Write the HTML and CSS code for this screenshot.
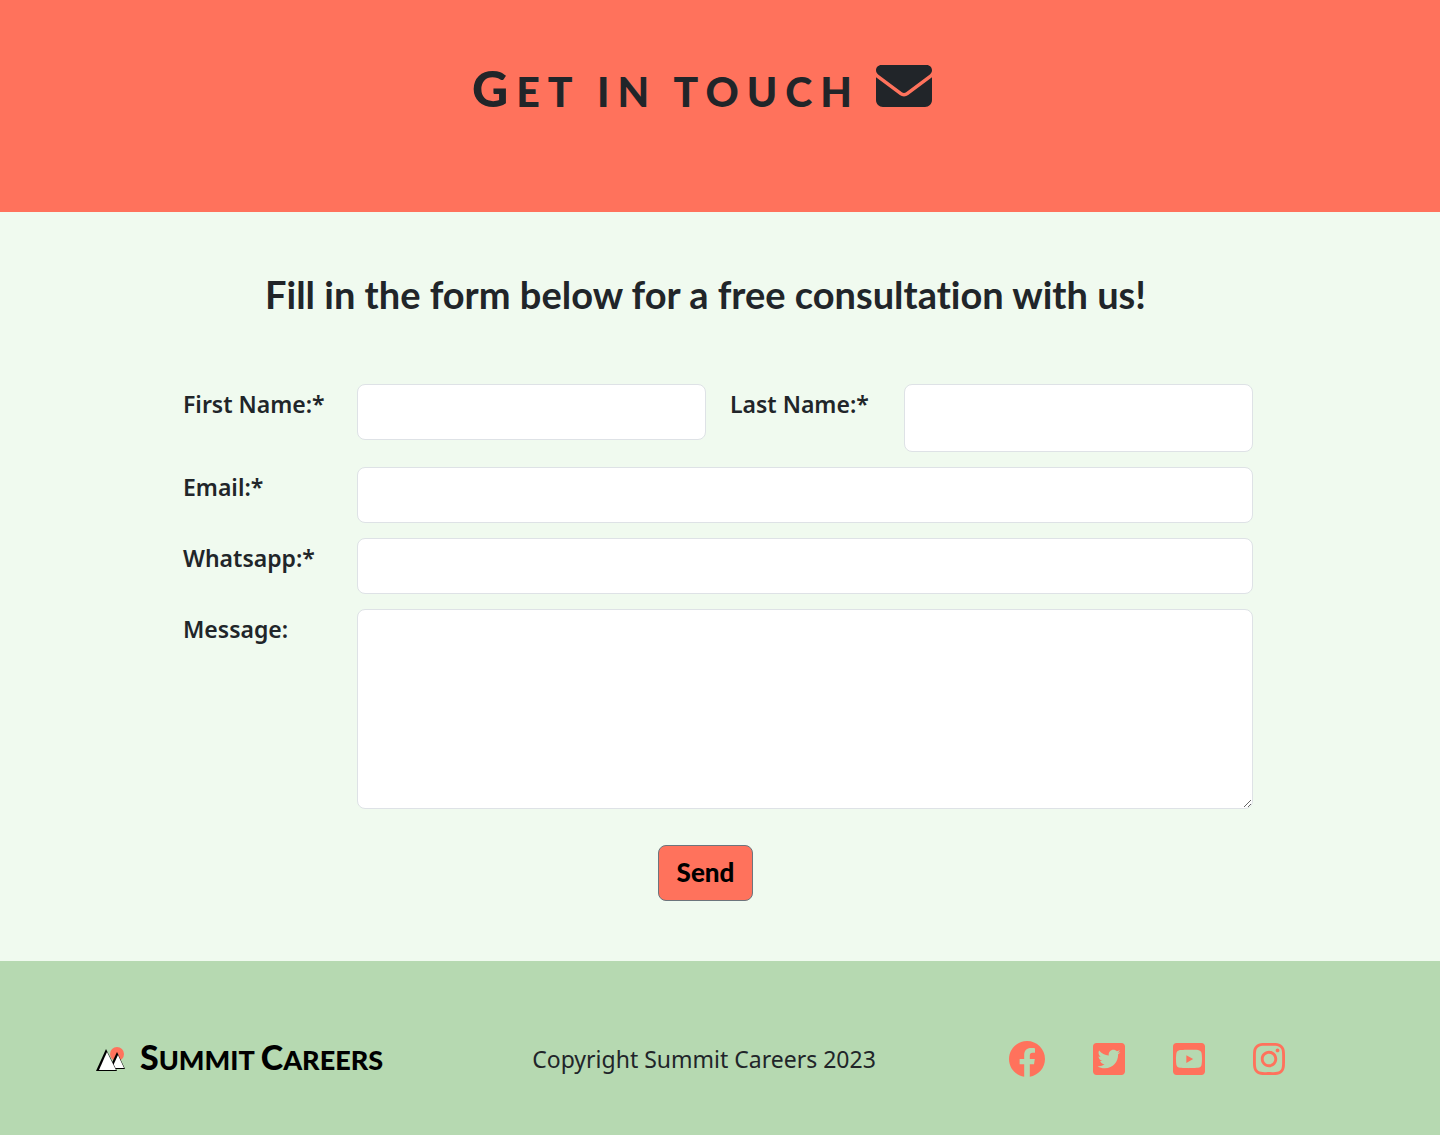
FILE: index.html
```html
<!DOCTYPE html>
<html lang="en">
<head>
  <meta charset="utf-8">
  <meta name="viewport" content="width=device-width, initial-scale=1">
  <title>Contact | Summit Careers</title>
  <link rel="stylesheet" href="styles.css">
</head>
<body>
  <header class="banner">
    <h1 class="banner-title">Get in touch</h1>
    <svg class="banner-icon" viewBox="0 0 512 512" aria-hidden="true"><path d="M48 64C21.500 64 0 85.500 0 112c0 15.100 7.100 29.300 19.200 38.400L236.800 313.600c11.400 8.500 27 8.500 38.400 0L492.800 150.400c12.100-9.100 19.200-23.300 19.200-38.400c0-26.500-21.500-48-48-48L48 64zM0 176L0 384c0 35.300 28.700 64 64 64l384 0c35.300 0 64-28.700 64-64l0-208L294.400 339.200c-22.800 17.100-54 17.100-76.800 0L0 176z"/></svg>
  </header>

  <main class="contact">
    <h2 class="contact-title">Fill in the form below for a free consultation with us!</h2>
    <form class="form">
      <label for="first-name">First Name:*</label>
      <input class="field" id="first-name" type="text" required>
      <label for="last-name">Last Name:*</label>
      <input class="field field-tall" id="last-name" type="text" required>
      <label for="email">Email:*</label>
      <input class="field field-wide" id="email" type="email" required>
      <label for="whatsapp">Whatsapp:*</label>
      <input class="field field-wide" id="whatsapp" type="tel" required>
      <label for="message">Message:</label>
      <textarea class="field field-wide field-message" id="message"></textarea>
      <div class="actions"><button class="send" type="submit">Send</button></div>
    </form>
  </main>

  <footer class="footer">
    <a class="brand" href="#">
      <svg class="brand-mark" viewBox="0 0 30 26" aria-hidden="true">
        <circle cx="21" cy="8" r="7" fill="#ff725c"/>
        <path d="M13 23L21 6l8 17z" fill="#000"/>
        <path d="M16 22L22 9l6 13z" fill="#fff"/>
        <path d="M0 25L10 3l11 22z" fill="#000"/>
        <path d="M3 24L11 6l9 18z" fill="#fff"/>
      </svg>
      <span class="brand-name"><span class="brand-word">Summit</span> <span class="brand-word">Careers</span></span>
    </a>
    <p class="copyright">Copyright Summit Careers 2023</p>
    <nav class="social" aria-label="Social media">
      <a href="#" aria-label="Facebook"><svg viewBox="8 8 496 496"><path d="M504 256C504 119 393 8 256 8S8 119 8 256c0 123.780 90.690 226.380 209.250 245V327.690h-63V256h63v-54.640c0-62.150 37-96.480 93.670-96.480 27.140 0 55.520 4.840 55.520 4.840v61h-31.280c-30.800 0-40.410 19.120-40.410 38.730V256h68.780l-11 71.690h-57.780V501C413.310 479.380 504 379.780 504 256z"/></svg></a>
      <a href="#" aria-label="Twitter"><svg class="square" viewBox="0 32 448 448"><path d="M400 32H48C21.500 32 0 53.500 0 80v352c0 26.500 21.500 48 48 48h352c26.500 0 48-21.500 48-48V80c0-26.500-21.500-48-48-48zm-48.900 158.800c.2 2.800.2 5.700.2 8.500 0 86.700-66 186.600-186.600 186.600-37.200 0-71.700-10.800-100.700-29.400 5.300.6 10.400.8 15.800.8 30.700 0 58.900-10.400 81.400-28-28.800-.6-53-19.500-61.300-45.500 10.100 1.500 19.200 1.500 29.600-1.200-30-6.100-52.500-32.500-52.500-64.400v-.8c8.700 4.900 18.900 7.900 29.600 8.300a65.447 65.447 0 0 1-29.200-54.600c0-12.200 3.200-23.400 8.900-33.100 32.300 39.800 80.800 65.800 135.200 68.600-9.300-44.500 24-80.600 64-80.600 18.900 0 35.900 7.900 47.900 20.700 14.800-2.800 29-8.300 41.600-15.800-4.900 15.200-15.200 28-28.800 36.100 13.200-1.400 26-5.100 37.800-10.200-8.900 13.100-20.100 24.700-32.900 34z"/></svg></a>
      <a href="#" aria-label="YouTube"><svg class="square" viewBox="0 32 448 448"><path d="M186.800 202.100l95.200 54.100-95.200 54.100V202.100zM448 80v352c0 26.500-21.500 48-48 48H48c-26.500 0-48-21.500-48-48V80c0-26.500 21.500-48 48-48h352c26.500 0 48 21.500 48 48zm-42 176.300s0-59.600-7.600-88.200c-4.200-15.800-16.500-28.200-32.200-32.400C337.900 128 224 128 224 128s-113.900 0-142.200 7.700c-15.700 4.200-28 16.600-32.200 32.400-7.600 28.500-7.600 88.200-7.600 88.200s0 59.600 7.600 88.200c4.200 15.800 16.500 27.700 32.200 31.900C110.100 384 224 384 224 384s113.900 0 142.200-7.700c15.700-4.200 28-16.100 32.200-31.900 7.600-28.500 7.600-88.100 7.600-88.100z"/></svg></a>
      <a href="#" aria-label="Instagram"><svg class="square" viewBox="0 32 448 448"><path d="M224.100 141c-63.600 0-114.900 51.300-114.900 114.900s51.300 114.900 114.900 114.900S339 319.500 339 255.900 287.700 141 224.100 141zm0 189.600c-41.100 0-74.700-33.500-74.700-74.700s33.500-74.700 74.700-74.700 74.700 33.500 74.700 74.700-33.600 74.700-74.700 74.700zm146.400-194.300c0 14.900-12 26.800-26.800 26.800-14.900 0-26.800-12-26.800-26.800s12-26.800 26.800-26.800 26.800 12 26.800 26.800zm76.100 27.200c-1.700-35.900-9.900-67.700-36.200-93.900-26.200-26.200-58-34.400-93.900-36.200-37-2.100-147.900-2.100-184.900 0-35.800 1.700-67.600 9.900-93.900 36.100s-34.400 58-36.200 93.900c-2.100 37-2.100 147.900 0 184.900 1.700 35.900 9.900 67.700 36.200 93.900s58 34.400 93.900 36.200c37 2.100 147.900 2.100 184.900 0 35.900-1.700 67.700-9.900 93.900-36.200 26.200-26.200 34.400-58 36.200-93.900 2.100-37 2.100-147.800 0-184.800zM398.800 388c-7.800 19.600-22.900 34.700-42.600 42.600-29.500 11.700-99.500 9-132.100 9s-102.700 2.600-132.100-9c-19.600-7.800-34.700-22.900-42.600-42.600-11.700-29.500-9-99.500-9-132.100s-2.600-102.700 9-132.100c7.800-19.600 22.900-34.700 42.600-42.600 29.500-11.700 99.500-9 132.100-9s102.700-2.600 132.100 9c19.600 7.800 34.700 22.900 42.600 42.600 11.700 29.500 9 99.500 9 132.100s2.700 102.700-9 132.100z"/></svg></a>
    </nav>
  </footer>
</body>
</html>
```
FILE: styles.css
```css
* {
  box-sizing: border-box;
}

body {
  margin: 0;
  min-height: 100vh;
  display: flex;
  flex-direction: column;
  background: #f0faef;
  color: #212529;
  font-family: "Noto Sans", "Open Sans", sans-serif;
  font-size: 23px;
  line-height: 36px;
}

.banner {
  display: flex;
  justify-content: center;
  align-items: flex-start;
  gap: 16px;
  padding: 58px 36px 90px 0;
  background: #ff725c;
}

.banner-title {
  margin: 0;
  font-family: Lato, sans-serif;
  font-size: 41px;
  font-weight: 900;
  line-height: 60px;
  letter-spacing: 8px;
  text-transform: uppercase;
}

.banner-title::first-letter {
  font-size: 50px;
}

.banner-icon {
  width: 56px;
  height: 56px;
  fill: #212529;
}

.contact {
  flex: 1;
  padding: 60px 187px 60px 183px;
}

.contact-title {
  margin: 0 25px 68px 0;
  font-family: Lato, sans-serif;
  font-size: 38px;
  font-weight: 700;
  font-variant-ligatures: none;
  line-height: 44px;
  text-align: center;
}

.form {
  display: grid;
  grid-template-columns: 3fr 7fr 3fr 7fr;
  align-items: start;
  gap: 15px 24px;
}

.form label {
  font-weight: 600;
  line-height: 40px;
  white-space: nowrap;
}

.field {
  display: block;
  width: 100%;
  height: 56px;
  padding: 8px 16px;
  border: 1px solid #dee2e6;
  border-radius: 8px;
  background: #fff;
  color: inherit;
  font: inherit;
}

.field-tall {
  height: 68px;
}

.field-wide {
  grid-column: span 3;
}

.field-message {
  height: 200px;
  resize: vertical;
}

.actions {
  grid-column: 1 / -1;
  display: flex;
  justify-content: center;
  padding: 21px 25px 0 0;
}

.send {
  height: 56px;
  padding: 0 18px 2px;
  border: 1px solid #6c757d;
  border-radius: 8px;
  background: #ff725c;
  color: #000;
  font-family: Lato, sans-serif;
  font-size: 26px;
  font-weight: 900;
}

.footer {
  display: flex;
  align-items: center;
  justify-content: space-between;
  padding: 78px 155px 60px 96px;
  background: #b6d9b1;
}

.brand {
  display: flex;
  align-items: center;
  gap: 14px;
  color: #000;
  text-decoration: none;
}

.brand-mark {
  width: 30px;
  height: 26px;
}

.brand-name {
  display: flex;
  gap: 6px;
  font-family: Lato, sans-serif;
  font-size: 27px;
  font-weight: 900;
  text-transform: uppercase;
}

.brand-word::first-letter {
  font-size: 34px;
}

.brand-word {
  display: block;
}

.copyright {
  margin: 0 0 0 16px;
}

.social {
  display: flex;
  align-items: center;
  gap: 48px;
}

.social a {
  display: flex;
}

.social svg {
  width: 36px;
  height: 36px;
  fill: #ff725c;
}

.social .square {
  width: 32px;
  height: 32px;
}
```
